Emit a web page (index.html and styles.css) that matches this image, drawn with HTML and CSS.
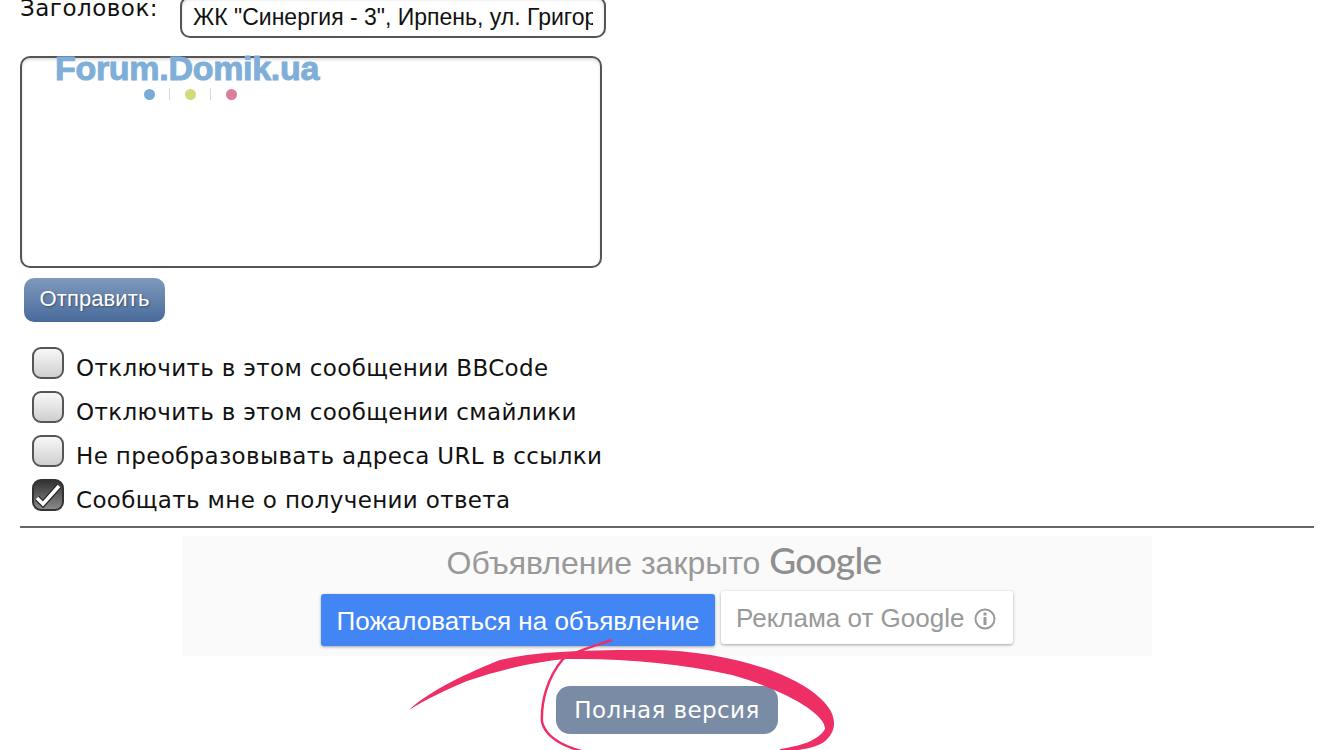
FILE: index.html
```html
<!DOCTYPE html>
<html lang="ru">
<head>
<meta charset="utf-8">
<title>Ответ</title>
<link rel="stylesheet" href="styles.css">
</head>
<body>
<div class="page">
  <form class="form">
    <div class="title-row">
      <label class="title-label" for="t">Заголовок:</label>
      <input class="title-input" id="t" type="text" value='ЖК "Синергия - 3", Ирпень, ул. Григорьева'>
    </div>
    <div class="message">
      <textarea class="message-box"></textarea>
      <div class="logo">
        <div class="logo-text">Forum.Domik.ua</div>
        <div class="logo-dots">
          <span class="dot dot-blue"></span><span class="bar"></span>
          <span class="dot dot-green"></span><span class="bar"></span>
          <span class="dot dot-pink"></span>
        </div>
      </div>
    </div>
    <button class="send" type="button">Отправить</button>
    <div class="options">
      <label class="option"><input class="check" type="checkbox">Отключить в этом сообщении BBCode</label>
      <label class="option"><input class="check" type="checkbox">Отключить в этом сообщении смайлики</label>
      <label class="option"><input class="check" type="checkbox">Не преобразовывать адреса URL в ссылки</label>
      <label class="option">
        <span class="check-wrap">
          <input class="check" type="checkbox" checked>
          <svg class="tick" viewBox="0 0 32 32">
            <path d="M5 19 L11 25 L27 7" fill="none" stroke="#222" stroke-width="6"/>
            <path d="M5 19 L11 25 L27 7" fill="none" stroke="#fff" stroke-width="3.6"/>
          </svg>
        </span>Сообщать мне о получении ответа</label>
    </div>
  </form>
  <hr class="rule">
  <div class="ad">
    <div class="ad-title">Объявление закрыто <span class="google">Google</span></div>
    <div class="ad-buttons">
      <button class="ad-report" type="button">Пожаловаться на объявление</button>
      <button class="ad-why" type="button">Реклама от Google
        <svg class="info" viewBox="0 0 24 24"><circle cx="12" cy="12" r="9.5" fill="none" stroke="#999" stroke-width="2"/><rect x="10.5" y="10" width="3" height="8" fill="#999"/><rect x="10.5" y="5.5" width="3" height="3" fill="#999"/></svg>
      </button>
    </div>
  </div>
  <div class="full-wrap">
    <a class="full" href="#">Полная версия</a>
  </div>
</div>
<svg class="scribble" viewBox="0 0 1334 750">
  <path d="M409 710 C430 690 470 672 500 660 C530 653 570 650 640 650 C720 648 792 672 820 698 C838 714 838 731 824 742 C814 749 796 750 780 753 L780 749 C800 746 818 741 825 729 C826 714 785 690 732 675 C680 663 620 658 567 659 C540 661 505 668 467 681 C445 690 425 700 409 710 Z" fill="#ee2f66"/>
  <path d="M612 640 C598 645 578 650 563 659 C547 678 541 702 542 722 C546 738 565 747 585 752" fill="none" stroke="#ee2f66" stroke-width="2.5"/>
</svg>
</body>
</html>
```
FILE: styles.css
```css
* { box-sizing: border-box; }
html, body { margin: 0; height: 750px; overflow: hidden; background: #fff; }
body { position: relative; font-family: "DejaVu Sans", sans-serif; color: #111; }
.page { padding: 0 20px; margin-top: -4px; }
.form { display: flex; flex-direction: column; align-items: flex-start; }
.title-row { display: flex; align-items: flex-start; }
.title-label { width: 160px; font-size: 23px; letter-spacing: .5px; line-height: 28px; margin-top: -2px; }
.title-input {
  width: 426px; height: 42px; padding: 0 11px;
  border: 2px solid #555; border-radius: 10px;
  font: 23px "Liberation Sans", sans-serif; color: #111;
  box-shadow: inset 0 2px 3px rgba(0,0,0,.12);
  outline: none; background: #fff;
}
.message { position: relative; margin-top: 18px; width: 582px; height: 212px; }
.message-box {
  display: block; width: 100%; height: 100%; resize: none;
  border: 2px solid #555; border-radius: 10px; background: #fff;
  box-shadow: inset 0 2px 3px rgba(0,0,0,.12); outline: none;
}
.logo { position: absolute; left: 35px; top: -3px; width: 266px; }
.logo-text {
  font: bold 34px/30px "Liberation Sans", sans-serif;
  color: #7fafd8; letter-spacing: -.3px; white-space: nowrap;
  -webkit-text-stroke: 1px #7fafd8;
}
.logo-dots { display: flex; align-items: center; justify-content: center; gap: 14.5px; margin-top: 5px; margin-left: 4px; }
.dot { width: 11px; height: 11px; border-radius: 50%; }
.dot-blue { background: #7aaad6; }
.dot-green { background: #d3dc7b; }
.dot-pink { background: #dc7d9b; }
.bar { width: 1px; height: 12px; background: #d8d8d8; }
.send {
  margin: 10px 0 0 4px; width: 141px; height: 44px; padding: 0 0 2px;
  border: 0; border-radius: 10px;
  background: linear-gradient(#7f99bc, #486a9b);
  color: #fff; font: 22px "Liberation Sans", sans-serif; letter-spacing: .1px;
  text-shadow: 1px 1px 2px rgba(0,0,0,.35);
}
.options { margin: 23px 0 0 12px; display: flex; flex-direction: column; }
.option { display: flex; align-items: center; height: 44px; padding-top: 2px; font-size: 23px; letter-spacing: .35px; white-space: nowrap; }
.check {
  appearance: none; -webkit-appearance: none; flex: none;
  display: block; width: 32px; height: 32px; margin: -10px 12px 0 0;
  border: 2px solid #555; border-radius: 9px;
  background: linear-gradient(#f8f8f8, #cfcfcf);
}
.check:checked { background: linear-gradient(#333, #8a8a8a); border-color: #333; }
.check-wrap { position: relative; display: block; flex: none; }
.tick { position: absolute; left: 0; top: -10px; width: 32px; height: 32px; }
.rule { height: 2px; margin: 5px 0 0; border: 0; background: #666; }
.ad { width: 970px; height: 120px; margin: 8px auto 0; background: #fafafa; display: flex; flex-direction: column; align-items: center; }
.ad-title { font: 32px/40px "Liberation Sans", sans-serif; color: #999; margin-top: 4px; height: 51px; margin-right: 6px; white-space: nowrap; }
.google { font: 500 37px/40px Lato, sans-serif; color: #8f8f8f; letter-spacing: -.7px; }
.ad-buttons { display: flex; align-items: flex-start; gap: 6px; }
.ad-report {
  margin-top: 3px; width: 394px; height: 52px; padding: 2px 0 0;
  border: 0; border-radius: 3px; background: #4285f4; color: #fff;
  font: 26px "Liberation Sans", sans-serif; box-shadow: 0 1px 3px rgba(0,0,0,.35);
}
.ad-why {
  width: 292px; height: 53px; padding: 2px 16px 0 15px; display: flex; align-items: center; gap: 10px;
  border: 0; border-radius: 3px; background: #fff; color: #999;
  font: 26px "Liberation Sans", sans-serif; box-shadow: 0 1px 3px rgba(0,0,0,.35); white-space: nowrap;
}
.info { width: 24px; height: 24px; flex: none; margin-left: -1px; }
.full-wrap { display: flex; justify-content: center; margin-top: 30px; }
.full {
  display: block; width: 222px; height: 48px; line-height: 48px; text-align: center;
  border-radius: 14px; background: #7a8ba5; color: #fff;
  font-size: 23px; letter-spacing: .4px; text-decoration: none;
}
.scribble { position: absolute; left: 0; top: 0; width: 1334px; height: 750px; pointer-events: none; }
```
